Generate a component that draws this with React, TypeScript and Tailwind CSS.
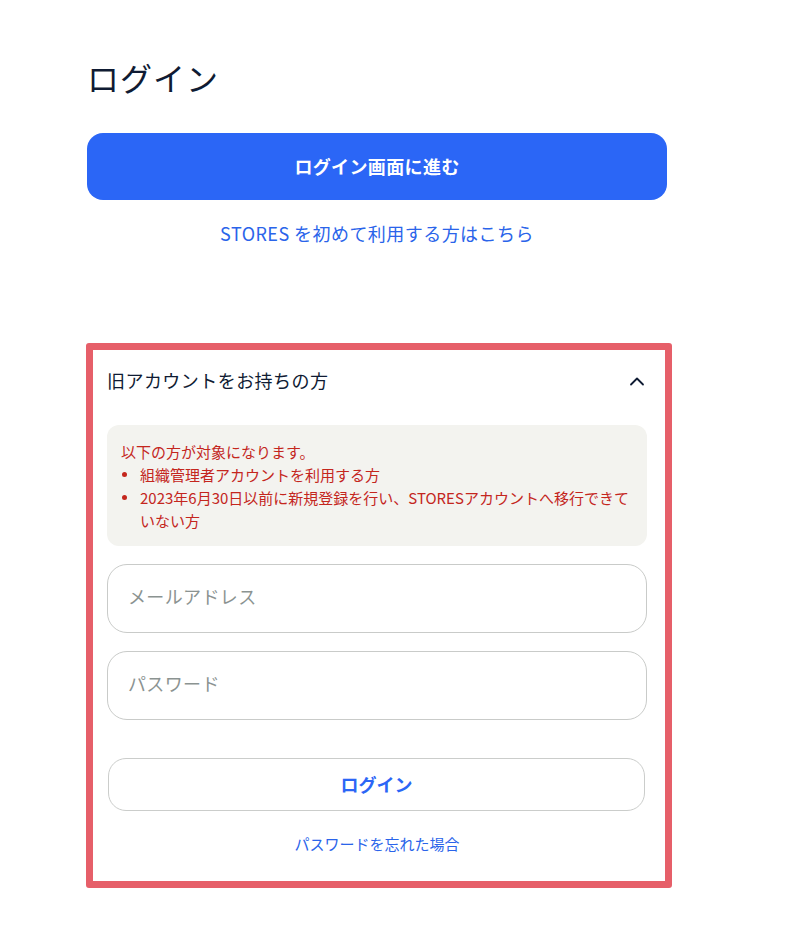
import React, { useState } from 'react';

const font = { fontFamily: '"Noto Sans CJK JP", "Noto Sans", sans-serif' };

const ChevronUp: React.FC = () => (
  <svg width="16" height="10" viewBox="0 0 16 10" fill="none" stroke="#0f1b33" strokeWidth={1.8} strokeLinecap="round" strokeLinejoin="round">
    <path d="M2 8.5 8 2.5l6 6" />
  </svg>
);

const Bullet: React.FC<{ children: React.ReactNode }> = ({ children }) => (
  <li className="flex">
    <span className="w-[19px] shrink-0 pt-[9px]">
      <span className="block w-[5px] h-[5px] rounded-full bg-[#c4261d] ml-[1px]" />
    </span>
    <span>{children}</span>
  </li>
);

const App: React.FC = () => {
  const [open, setOpen] = useState(true);
  const [email, setEmail] = useState('');
  const [password, setPassword] = useState('');

  return (
    <div className="min-h-[946px] w-[796px] bg-white text-[#0f1b33]" style={font}>
      <div className="pl-[87px] pt-[53px] w-[667px]">
        <h1 className="text-[32px] leading-[48px] font-normal tracking-[0.03em]">ログイン</h1>

        <button className="mt-[32px] w-[580px] h-[67px] rounded-[16px] bg-[#2b66f6] text-white text-[18px] font-bold tracking-[0.02em]">
          ログイン画面に進む
        </button>

        <div className="mt-[20px] text-center">
          <a href="#" className="text-[18px] leading-[27px] text-[#2a64ea] tracking-[0.025em]">
            STORES を初めて利用する方はこちら
          </a>
        </div>

        <div className="mt-[96px] -ml-px w-[586px] border-[7px] border-[#e65f69] rounded-[3px] bg-white">
          <div className="pl-[14px] pr-[18px]">
            <button
              onClick={() => setOpen(!open)}
              className="w-full flex items-center justify-between pt-[16px] pb-[16px]"
            >
              <span className="text-[18px] leading-[28px] tracking-[0.025em]">旧アカウントをお持ちの方</span>
              <span className="pr-[2px] pt-[2px]">
                <ChevronUp />
              </span>
            </button>

            {open && (
              <div className="pb-[26px]">
                <div className="mt-[15px] rounded-[12px] bg-[#f3f3ef] pl-[14px] pr-[14px] pt-[15px] pb-[14px] text-[15px] leading-[23px] text-[#c4261d]">
                  <p>以下の方が対象になります。</p>
                  <ul>
                    <Bullet>組織管理者アカウントを利用する方</Bullet>
                    <Bullet>
                      2023年6月30日以前に新規登録を行い、STORESアカウントへ移行できて
                      <br />
                      いない方
                    </Bullet>
                  </ul>
                </div>

                <input
                  type="email"
                  value={email}
                  onChange={(e) => setEmail(e.target.value)}
                  placeholder="メールアドレス"
                  className="mt-[18px] block w-full h-[69px] rounded-[20px] border border-[#c9cbc9] px-[20px] pb-[6px] text-[18px] tracking-[0.02em] placeholder:text-[#8b9391] outline-none"
                />
                <input
                  type="password"
                  value={password}
                  onChange={(e) => setPassword(e.target.value)}
                  placeholder="パスワード"
                  className="mt-[18px] block w-full h-[69px] rounded-[20px] border border-[#c9cbc9] px-[20px] pb-[6px] text-[18px] tracking-[0.02em] placeholder:text-[#8b9391] outline-none"
                />

                <button className="mt-[38px] mx-px block w-[537px] h-[53px] rounded-[18px] border border-[#cbcdcb] bg-white text-[18px] font-bold text-[#2b66f6]">
                  ログイン
                </button>

                <div className="mt-[20px] text-center">
                  <a href="#" className="text-[15px] leading-[22px] text-[#2a64ea]">
                    パスワードを忘れた場合
                  </a>
                </div>
              </div>
            )}
          </div>
        </div>
      </div>
    </div>
  );
};

export default App;
